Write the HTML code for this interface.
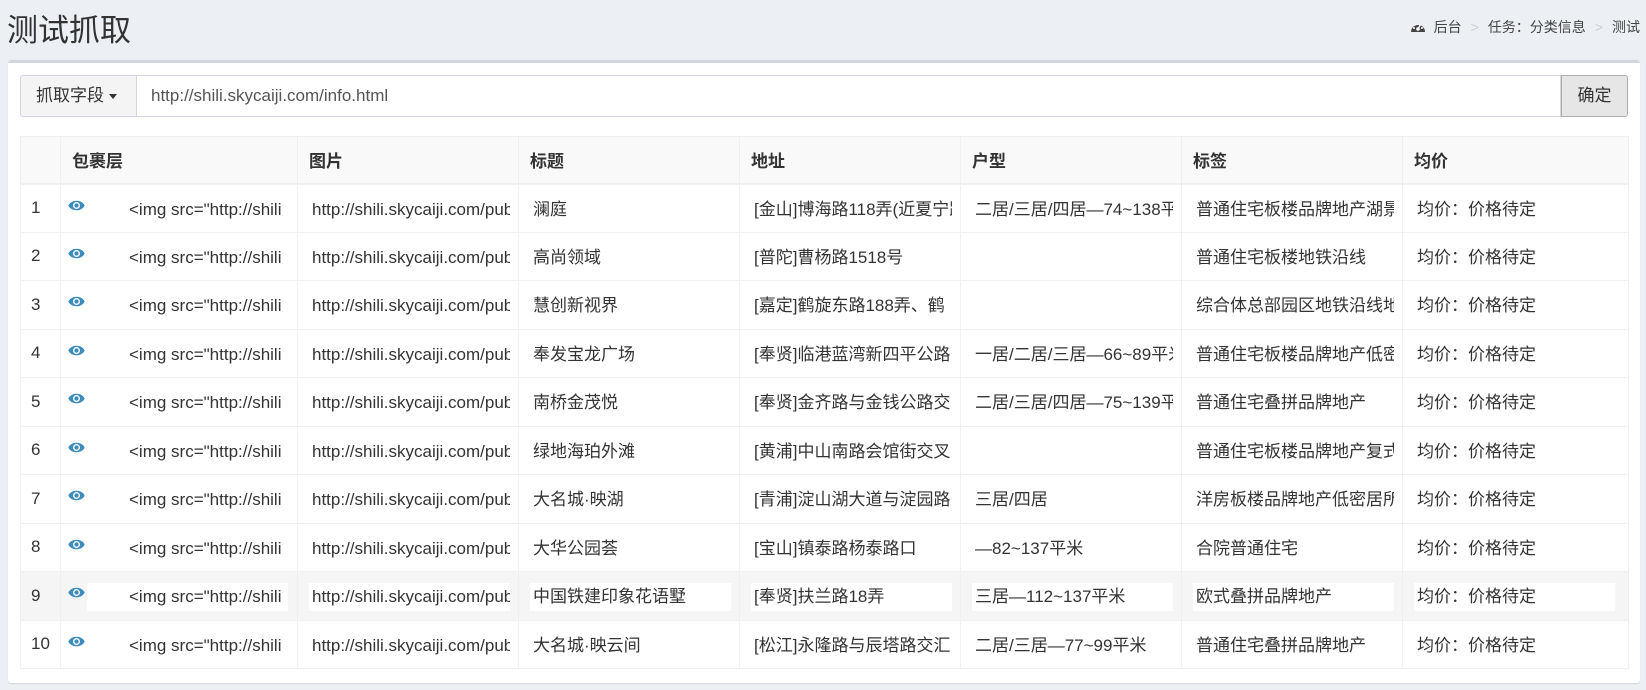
<!DOCTYPE html><html><head><meta charset="utf-8"><style>
*{box-sizing:border-box}
body{margin:0;width:1646px;height:690px;background:#ecf0f5;font-family:"Liberation Sans","Noto Sans CJK SC",sans-serif;color:#333;position:relative;overflow:hidden}
h1{position:absolute;left:7px;top:5px;margin:0;font-weight:400;font-size:31px;color:#333}
.bc{position:absolute;right:6px;top:17px;font-size:14px;color:#444}
.bc .s{color:#ccc;margin:0 9px}
.box{position:absolute;left:8px;top:60px;width:1632px;height:623px;background:#fff;border-top:3px solid #d2d6de;border-radius:3px;box-shadow:0 1px 1px rgba(0,0,0,.1)}
.ig{position:absolute;left:12px;top:12px;width:1608px;height:42px;display:flex}
.dd{width:117px;border:1px solid #d2d6de;background:#f4f4f4;border-radius:3px 0 0 3px;font-size:17px;line-height:40px;padding-left:15px;color:#333}
.car{display:inline-block;border-top:5px solid #333;border-left:4px solid transparent;border-right:4px solid transparent;vertical-align:middle;margin-left:5px}
.in{flex:1;border:1px solid #d2d6de;border-left:0;font-size:17px;line-height:40px;padding-left:14px;color:#555}
.ok{width:67px;border:1px solid #adadad;background:#e6e6e6;border-radius:0 3px 3px 0;font-size:17px;line-height:40px;text-align:center}
table{position:absolute;left:12px;top:73px;border-collapse:collapse;table-layout:fixed;width:1608px}
td,th{border:1px solid #f0f0f0;font-size:17px;padding:0;white-space:nowrap;overflow:hidden}
th{height:47px;background:#f9f9f9;text-align:left;font-weight:700;padding-left:11px;border-bottom:2px solid #f0f0f0}
td{height:48.5px;position:relative}
td.n{padding-left:10px}
.c{position:absolute;left:11px;top:11px;width:201px;height:28px;overflow:hidden;padding-left:3px;line-height:27px;color:#333}
tr.h td{background:#f5f5f5}
tr.h .c{background:#fff}
.w .c{left:26px;width:201px;padding-left:42px}
.eye{position:absolute;left:7px;top:14px}
</style></head><body>
<h1>测试抓取</h1>
<div class="bc"><svg width="16" height="13" viewBox="0 0 16 13" style="vertical-align:-1px;margin-right:8px"><path d="M1 12A7 7 0 1 1 15 12Z" fill="#444"/><circle cx="8" cy="9" r="1.8" fill="#fff"/><path d="M8 9L10.5 4.5" stroke="#fff" stroke-width="1.4"/><circle cx="4" cy="8" r="1" fill="#fff"/><circle cx="12" cy="8" r="1" fill="#fff"/><circle cx="5.5" cy="4.5" r="1" fill="#fff"/></svg>后台<span class="s">&gt;</span>任务：分类信息<span class="s">&gt;</span>测试</div>
<div class="box">
<div class="ig"><div class="dd">抓取字段<span class="car"></span></div><div class="in">http://shili.skycaiji.com/info.html</div><div class="ok">确定</div></div>
<table>
<colgroup><col style="width:40px"><col style="width:237px"><col style="width:221px"><col style="width:221px"><col style="width:221px"><col style="width:221px"><col style="width:221px"><col style="width:226px"></colgroup>
<tr><th></th><th>包裹层</th><th>图片</th><th>标题</th><th>地址</th><th>户型</th><th>标签</th><th>均价</th></tr>
<tbody id="tb"></tbody>
</table>
</div>
<script>
var d=[["澜庭","[金山]博海路118弄(近夏宁路)","二居/三居/四居—74~138平米","普通住宅板楼品牌地产湖景"],
["高尚领域","[普陀]曹杨路1518号","","普通住宅板楼地铁沿线"],
["慧创新视界","[嘉定]鹤旋东路188弄、鹤","","综合体总部园区地铁沿线地"],
["奉发宝龙广场","[奉贤]临港蓝湾新四平公路","一居/二居/三居—66~89平米","普通住宅板楼品牌地产低密"],
["南桥金茂悦","[奉贤]金齐路与金钱公路交","二居/三居/四居—75~139平","普通住宅叠拼品牌地产"],
["绿地海珀外滩","[黄浦]中山南路会馆街交叉","","普通住宅板楼品牌地产复式"],
["大名城·映湖","[青浦]淀山湖大道与淀园路","三居/四居","洋房板楼品牌地产低密居所"],
["大华公园荟","[宝山]镇泰路杨泰路口","—82~137平米","合院普通住宅"],
["中国铁建印象花语墅","[奉贤]扶兰路18弄","三居—112~137平米","欧式叠拼品牌地产"],
["大名城·映云间","[松江]永隆路与辰塔路交汇","二居/三居—77~99平米","普通住宅叠拼品牌地产"]];
var eye='<svg class="eye" width="17" height="13" viewBox="0 0 16 12"><path d="M0.3 6C3 0 13 0 15.7 6C13 12 3 12 0.3 6Z" fill="#3c8dbc"/><circle cx="8" cy="6" r="3.3" fill="#fff"/><circle cx="8" cy="6" r="2" fill="#3c8dbc"/></svg>';
var h='';d.forEach(function(r,i){h+='<tr'+(i==8?' class="h"':'')+'><td class="n">'+(i+1)+'</td><td class="w">'+eye+'<div class="c">&lt;img src="http://shili</div></td><td><div class="c">http://shili.skycaiji.com/public/</div></td><td><div class="c">'+r[0]+'</div></td><td><div class="c">'+r[1]+'</div></td><td><div class="c">'+r[2]+'</div></td><td><div class="c">'+r[3]+'</div></td><td><div class="c">均价：价格待定</div></td></tr>'});
document.getElementById('tb').innerHTML=h;
</script>
</body></html>
